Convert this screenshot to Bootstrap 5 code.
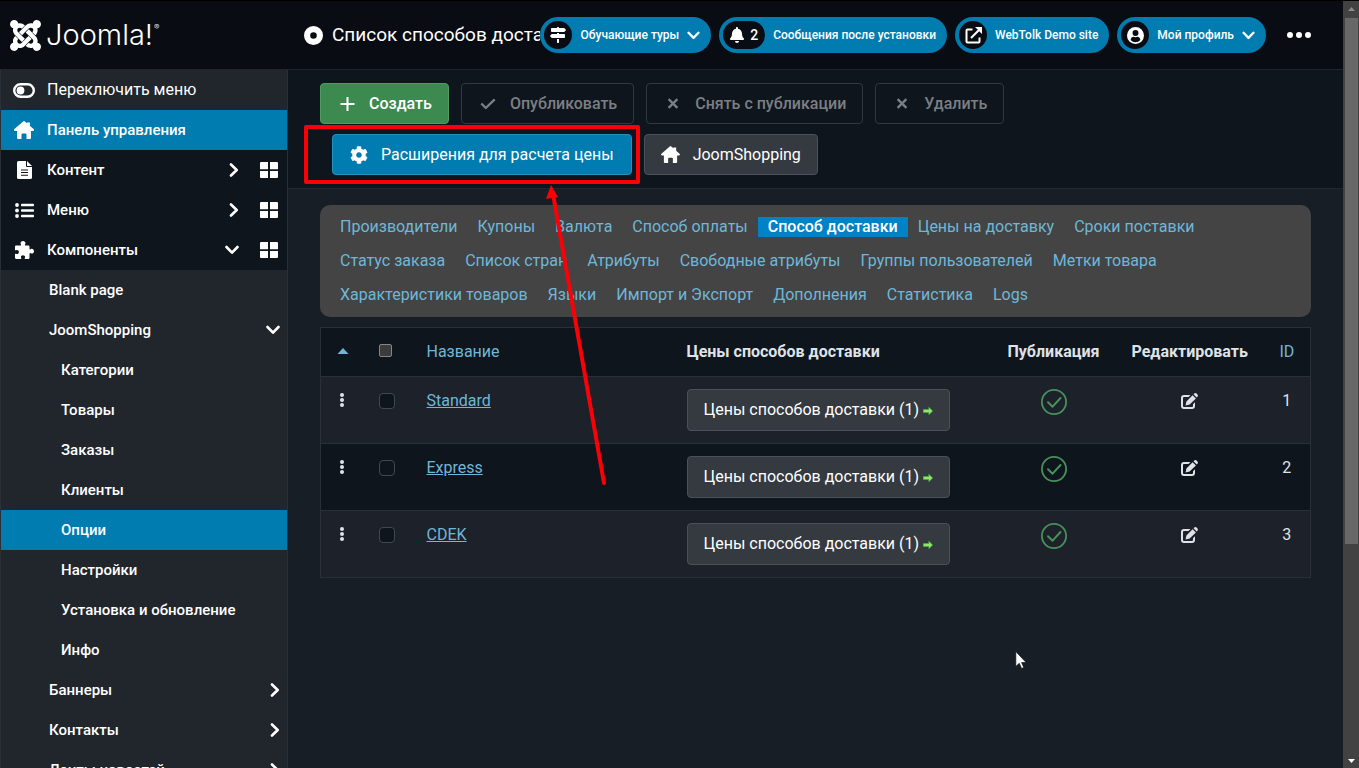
<!DOCTYPE html>
<html lang="ru">
<head>
<meta charset="utf-8">
<meta name="viewport" content="width=device-width, initial-scale=1">
<title>Список способов доставки</title>
<link href="https://cdn.jsdelivr.net/npm/bootstrap@5.3.0/dist/css/bootstrap.min.css" rel="stylesheet">
<style>
  :root { --blue: #007cb0; --line: #2a3036; --deep: #0f151c; --panel: #20262c; --sky: #6fb7d8; }
  body { font-family: Roboto, "Noto Sans", sans-serif; font-size: 16px; line-height: 24px; color: #dfe3e7; background: #181e25; }
  svg { fill: currentColor; flex: none; display: block; }
  .stroke { fill: none; stroke: currentColor; stroke-width: 3; stroke-linecap: round; stroke-linejoin: round; }
  .shell { border-top: 1px solid #000; }

  .topbar { background: #090c13; height: 69px; border-bottom: 1px solid #20252b; color: #fff; }
  .brand { width: 288px; padding-left: 10px; gap: 5px; color: #fff; flex: none; }
  .brand-word { font: 300 29px/36px Inter, sans-serif; }
  .brand-word sup { font-size: 8px; top: -15px; margin-left: 1px; }
  .page-title { font-size: 19px; line-height: 28px; font-weight: 400; margin: 0; }
  .title-wrap { padding-left: 16px; gap: 9px; min-width: 0; }
  .pills { gap: 8px; padding-right: 32px; }
  .pill { height: 36px; padding: 0 11px 0 4px; gap: 8px; border: 0; border-radius: 18px; background: var(--blue); color: #fff; font-size: 12px; font-weight: 500; white-space: nowrap; text-decoration: none; }
  .pill-icon { min-width: 28px; height: 28px; border-radius: 14px; background: #090c13; gap: 6px; font-size: 14px; }
  .pill-icon.wide { padding: 0 7px; }
  .dots { border: 0; background: none; color: #fff; padding: 0; margin-left: 13px; }

  .side { width: 288px; flex: none; background: var(--panel); border: solid var(--line); border-width: 0 1px; overflow: hidden; font-size: 15px; font-weight: 500; }
  .side a, .side button { display: flex; align-items: center; width: 100%; height: 40px; padding: 0 9px 0 11px; color: #fff; text-decoration: none; border: 0; background: none; flex: none; }
  .side .ico { width: 24px; margin-right: 11px; display: flex; justify-content: center; }
  .side .top { background: var(--deep); }
  .side .on { background: var(--blue); }
  .side .sub { padding: 0 7px 0 48px; }
  .side .sub2 { padding-left: 60px; }
  .side .arr { margin-left: auto; }
  .side .grid { margin-left: 21px; }
  .side .toggle { font-size: 16px; font-weight: 400; }

  .tools { background: var(--deep); border-bottom: 1px solid #22282f; padding: 13px 32px 13px 20px; row-gap: 10px; }
  .tools .btn { height: 41px; margin-left: 12px; padding: 0 17px; display: flex; align-items: center; gap: 13px; border-radius: 4px; color: #fff; border: 1px solid #4b5158; background: #343a40; font-size: 16px; font-weight: 400; }
  .tools .btn-house { padding: 0 16px; }
  .tools .btn-make { background: #3c8a4f; border-color: #4f9c61; font-weight: 500; padding: 0 16px 0 18px; }
  .tools .btn-ext { background: var(--blue); border-color: #2590bf; }
  .tools .btn:disabled { background: none; border-color: #33383e; color: #7b7f84; opacity: 1; font-weight: 500; gap: 14px; padding: 0 16px 0 18px; }
  /* the wrapped second row starts one button margin further in */
  .tools .btn-ext { margin-left: 24px; }
  .marked { position: relative; }
  .marked::after { content: ""; position: absolute; inset: -10px -9px -10px -29px; border: 4px solid #f90106; border-radius: 2px; pointer-events: none; }

  .content { padding: 16px 32px 0; }
  .links { background: #444; border-radius: 10px; padding: 5px 10px; margin-bottom: 10px; }
  .links a { color: var(--sky); text-decoration: none; padding: 0 10px; line-height: 20px; margin: 7px 0; }
  .links .cur { background: #0082c4; color: #fff; font-weight: 500; }

  .grid-table { table-layout: fixed; margin: 0; border: 1px solid var(--line); color: #dfe3e7; }
  .grid-table > :not(caption) > * > * { padding: 12px 16px; background: #1d2129; color: inherit; border-bottom: 1px solid var(--line); box-shadow: none; white-space: nowrap; vertical-align: top; }
  .grid-table > thead > tr > *, .grid-table > tbody > tr:nth-child(even) > * { background: var(--deep); }
  .grid-table a { color: var(--sky); }
  .grid-table th { font-weight: 700; }
  .grid-table th a { text-decoration: none; font-weight: 400; }
  .grid-table .btn { height: 42px; padding: 0 16px; background: #343a40; border: 1px solid #4b5158; border-radius: 4px; color: #fff; display: inline-flex; align-items: center; gap: 4px; font-size: 16px; }
  .grid-table .form-check-input { width: 16px; height: 16px; margin: 4px 0 0 -1px; background: var(--deep); border: 1px solid #42484f; border-radius: 4px; display: block; }
  .grid-table thead .form-check-input { width: 13px; height: 13px; background: #3b3b3b; border-color: #858585; border-radius: 2px; }
  .grid-table .plain { border: 0; background: none; color: inherit; padding: 0; }
  .grid-table .plain.live { color: #46925c; }

  .bar { width: 16px; flex: none; background: #424242; color: #fff; padding-bottom: 5px; }
  .bar-up { height: 16px; color: #8a8a8a; }
  .bar-thumb { width: 13px; height: 69%; background: #686868; margin: 1px 0 0 2px; }
  .arrow { position: absolute; left: 540px; top: 184px; }
  .pointer { position: absolute; left: 1015px; top: 650px; }
</style>
</head>
<body>
<svg width="0" height="0" class="position-absolute" aria-hidden="true">
  <symbol id="joomla" viewBox="0 32 448 448"><path d="M.6 92.1C.6 58.8 27.4 32 60.4 32c30 0 54.5 21.9 59.2 50.2 32.6-7.6 67.1.6 96.5 30l-44.3 44.3c-20.5-20.5-42.6-16.3-55.4-3.5-14.3 14.3-14.3 37.9 0 52.2l99.5 99.5-44 44.3c-87.7-87.2-49.7-49.7-99.8-99.7-26.8-26.5-35-64.8-24.8-98.9C20.4 144.6.6 120.7.6 92.1zm129.5 116.4l44.3 44.3c10-10 89.7-89.7 99.7-99.8 14.3-14.3 37.6-14.3 51.9 0 12.8 12.8 17 35-3.5 55.4l44 44.3c31.2-31.2 38.5-67.6 28.9-101.2 29.2-4.1 51.9-29.2 51.9-59.5 0-33.2-26.8-60.1-59.8-60.1-30.3 0-55.4 22.5-59.5 51.6-33.8-9.9-71.7-1.5-98.3 25.1-18.3 19.1-71.1 71.5-99.6 99.900zm266.3 152.200c8.200-32.700-.9-68.500-26.300-93.900-11.800-12.200 5 4.700-99.500-99.700l-44.300 44.300 99.700 99.700c14.300 14.300 14.300 37.600 0 51.900-12.800 12.800-35 17-55.400-3.500l-44 44.300c27.600 30.200 68 38.800 102.700 28 5.500 27.400 29.700 48.100 58.900 48.100 33 0 59.800-26.800 59.800-60.100 0-30.200-22.500-55-51.600-59.100zm-84.300-53.100l-44-44.300c-87 86.400-50.400 50.400-99.700 99.800-14.300 14.300-37.600 14.300-51.900 0-13.100-13.400-16.900-35.300 3.200-55.400l-44-44.300c-30.200 30.200-38 65.200-29.500 98.300-26.700 6-46.200 29.900-46.200 58.200C0 453.200 26.800 480 59.800 480c28.600 0 52.500-19.800 58.600-46.700 32.700 8.200 68.500-.6 94.200-26 32.100-32 12.200-12.400 99.500-99.700z"/></symbol>
  <symbol id="home" viewBox="0 0 20 18"><path d="M9.200.4a1.200 1.200 0 0 1 1.600 0L13 2.300V1.600h3v3.300l3.600 3.200c.8.8.4 1.900-.7 1.900H17v7a1 1 0 0 1-1 1h-3.500v-4.500a1 1 0 0 0-1-1h-3a1 1 0 0 0-1 1V18H4a1 1 0 0 1-1-1v-7H1.100C0 10-.4 8.900.4 8.100z"/></symbol>
  <symbol id="chevR" viewBox="0 0 10 14"><path class="stroke" style="stroke-width:2.600" d="M2 1.500 7.700 7 2 12.500"/></symbol>
  <symbol id="chevD" viewBox="0 0 14 10"><path class="stroke" style="stroke-width:2.600" d="M1.500 2 7 7.700 12.500 2"/></symbol>
  <symbol id="tiles" viewBox="0 0 18 16"><path d="M1 0h7v7.300H0V1a1 1 0 0 1 1-1zM10 0h7a1 1 0 0 1 1 1v6.300h-8zM0 9h8v7H1a1 1 0 0 1-1-1zM10 9h8v6a1 1 0 0 1-1 1h-7z"/></symbol>
  <symbol id="puzzle" viewBox="0 0 19 18"><path d="M0 5.800C0 5 .5 4.500 1.200 4.500h4.200c.7 0 .8-.6.5-1.100C4.900 1.800 6.100 0 8 0s3.100 1.800 2.100 3.400c-.3.500-.2 1.100.5 1.100h2.700c.7 0 1.200.5 1.200 1.200v2c0 .7.600.9 1.100.5 1.600-1 3.400.200 3.400 2s-1.800 3-3.400 2c-.5-.3-1.100-.1-1.100.5v4c0 .8-.5 1.300-1.200 1.300h-3.100c-.6 0-.8-.5-.4-1 .8-1.500-.200-2.800-1.800-2.800s-2.600 1.300-1.800 2.800c.3.500.1 1-.5 1H1.200C.5 18 0 17.500 0 16.800v-3.600c0-.6.500-.7 1-.4 1.500.7 2.900-.200 2.900-1.800s-1.400-2.500-2.900-1.800c-.5.300-1 .1-1-.4z"/></symbol>
  <symbol id="cog" viewBox="0 0 512 512"><path d="M487.4 315.7l-42.6-24.6c4.3-23.2 4.3-47 0-70.2l42.6-24.6c4.9-2.8 7.1-8.6 5.5-14-11.1-35.6-30-67.8-54.7-94.6-3.8-4.1-10-5.1-14.8-2.3L380.8 110c-17.9-15.4-38.5-27.3-60.8-35.1V25.8c0-5.6-3.9-10.5-9.4-11.7-36.7-8.2-74.3-7.8-109.2 0-5.5 1.2-9.4 6.1-9.4 11.7V75c-22.2 7.9-42.8 19.8-60.8 35.1L88.7 85.5c-4.9-2.8-11-1.9-14.8 2.3-24.7 26.7-43.6 58.9-54.7 94.6-1.7 5.4.6 11.2 5.5 14L67.3 221c-4.3 23.2-4.3 47 0 70.2l-42.6 24.6c-4.9 2.8-7.1 8.6-5.5 14 11.1 35.6 30 67.8 54.7 94.6 3.8 4.1 10 5.1 14.8 2.3l42.6-24.6c17.9 15.4 38.5 27.3 60.8 35.1v49.2c0 5.6 3.9 10.5 9.4 11.7 36.7 8.2 74.3 7.8 109.2 0 5.5-1.2 9.4-6.1 9.4-11.7v-49.2c22.2-7.9 42.8-19.8 60.8-35.1l42.6 24.6c4.9 2.8 11 1.9 14.8-2.3 24.7-26.7 43.6-58.9 54.7-94.6 1.5-5.5-.7-11.3-5.6-14.1zM256 336c-44.1 0-80-35.9-80-80s35.9-80 80-80 80 35.9 80 80-35.9 80-80 80z"/></symbol>
  <symbol id="signs" viewBox="0 0 512 512"><path d="M507.31 84.69L464 41.37c-6-6-14.14-9.37-22.63-9.37H288V16c0-8.84-7.16-16-16-16h-32c-8.84 0-16 7.16-16 16v16H56c-13.25 0-24 10.75-24 24v80c0 13.25 10.75 24 24 24h385.37c8.49 0 16.62-3.37 22.63-9.37l43.31-43.31c6.25-6.26 6.25-16.38 0-22.63zM224 496c0 8.84 7.16 16 16 16h32c8.84 0 16-7.16 16-16V384h-64v112zm232-272H288v-32h-64v32H70.63c-8.49 0-16.62 3.37-22.63 9.37L4.69 276.69c-6.25 6.25-6.25 16.38 0 22.63L48 342.63c6 6 14.14 9.37 22.63 9.37H456c13.25 0 24-10.75 24-24v-80c0-13.25-10.75-24-24-24z"/></symbol>
  <symbol id="bell" viewBox="0 0 448 512"><path d="M224 512c35.32 0 63.97-28.65 63.97-64H160.03c0 35.35 28.65 64 63.97 64zm215.39-149.71c-19.32-20.76-55.47-51.99-55.47-154.29 0-77.7-54.48-139.9-127.94-155.16V32c0-17.67-14.32-32-31.98-32s-31.98 14.33-31.98 32v20.84C118.56 68.1 64.08 130.3 64.08 208c0 102.3-36.15 133.53-55.47 154.29-6 6.45-8.66 14.16-8.61 21.71.11 16.4 12.98 32 32.1 32h383.8c19.12 0 32-15.6 32.1-32 .05-7.55-2.61-15.27-8.61-21.71z"/></symbol>
  <symbol id="cross" viewBox="0 0 12 12"><path class="stroke" style="stroke-linecap:butt;stroke-width:2.500" d="M1.200 1.200l9.600 9.600M10.800 1.200l-9.600 9.600"/></symbol>
  <symbol id="pen" viewBox="0 0 17 16"><path d="M9.500 2H3a3 3 0 0 0-3 3v8a3 3 0 0 0 3 3h8a3 3 0 0 0 3-3V9.200l-2 2V13a1 1 0 0 1-1 1H3a1 1 0 0 1-1-1V5a1 1 0 0 1 1-1h4.500z"/><path d="M11.600 2.200l3.300 3.300-6.300 6.100-4 1 .8-4zM12.500 1.300 13.200.600c.7-.7 1.700-.7 2.400 0l.8.8c.7.7.7 1.700 0 2.400l-.7.8z"/></symbol>
  <symbol id="okay" viewBox="0 0 26 26"><circle cx="13" cy="13" r="12.100" fill="none" stroke="currentColor" stroke-width="1.800"/><path class="stroke" style="stroke-width:2" d="M7 13.200l4.600 4.500L19.500 9"/></symbol>
  <symbol id="drag" viewBox="0 0 4 14"><circle cx="2" cy="2" r="2"/><circle cx="2" cy="7" r="2"/><circle cx="2" cy="12" r="2"/></symbol>
  <symbol id="go" viewBox="0 0 10 9"><path fill="#8fe66f" stroke="#3fae2a" stroke-width=".6" d="M.3 3.500h5.500V1.200L9.700 5 5.800 8.800V6.500H.3z"/></symbol>
</svg>

<div class="shell d-flex vh-100 overflow-hidden">
  <div class="d-flex flex-column flex-grow-1" style="min-width:0">
    <header class="topbar d-flex align-items-center flex-shrink-0">
      <a href="#" class="brand d-flex align-items-center text-decoration-none">
        <svg width="31" height="31"><use href="#joomla"/></svg>
        <span class="brand-word">Joomla!<sup>®</sup></span>
      </a>
      <div class="title-wrap d-flex align-items-center flex-fill overflow-hidden">
        <svg width="19" height="19" viewBox="0 0 19 19"><path fill-rule="evenodd" d="M9.500 0a9.500 9.500 0 1 1 0 19 9.500 9.500 0 0 1 0-19zm0 6.200a3.300 3.300 0 1 0 0 6.600 3.300 3.300 0 0 0 0-6.600z"/></svg>
        <h1 class="page-title text-nowrap">Список способов доставки</h1>
      </div>
      <div class="pills d-flex align-items-center flex-shrink-0">
        <button type="button" class="pill d-flex align-items-center"><span class="pill-icon d-flex align-items-center justify-content-center"><svg width="16" height="16"><use href="#signs"/></svg></span>Обучающие туры<svg width="13" height="9"><use href="#chevD"/></svg></button>
        <a href="#" class="pill d-flex align-items-center"><span class="pill-icon wide d-flex align-items-center justify-content-center"><svg width="14" height="16"><use href="#bell"/></svg>2</span>Сообщения после установки</a>
        <a href="#" class="pill d-flex align-items-center"><span class="pill-icon d-flex align-items-center justify-content-center"><svg width="17" height="17" viewBox="0 0 17 17"><path class="stroke" style="stroke-width:2;stroke-linecap:butt" d="M7.500 2.500H2.500a1 1 0 0 0-1 1v11a1 1 0 0 0 1 1h11a1 1 0 0 0 1-1v-4M6 11l8-8"/><path d="M10 0h7v7l-2.300-2.300L12.300 2.300z"/></svg></span>WebTolk Demo site</a>
        <button type="button" class="pill d-flex align-items-center"><span class="pill-icon d-flex align-items-center justify-content-center"><svg width="17" height="17" viewBox="0 0 16 16"><circle cx="8" cy="8" r="8"/><circle cx="8" cy="5.700" r="2.800" fill="#090c13"/><path fill="#090c13" d="M3.400 12.200c.3-2 1.500-3 2.700-3 1.300.5 2.500.5 3.800 0 1.200 0 2.400 1 2.700 3a6 6 0 0 1-9.200 0z"/></svg></span>Мой профиль<svg width="13" height="9"><use href="#chevD"/></svg></button>
        <button type="button" class="dots" aria-label="Ещё"><svg width="24" height="6" viewBox="0 0 24 6"><circle cx="3" cy="3" r="3"/><circle cx="12" cy="3" r="3"/><circle cx="21" cy="3" r="3"/></svg></button>
      </div>
    </header>

    <div class="d-flex flex-grow-1" style="min-height:0">
      <nav class="side d-flex flex-column">
        <button type="button" class="toggle"><span class="ico"><svg width="22" height="15" viewBox="0 0 22 15"><rect x="1.200" y="1.200" width="19.600" height="12.600" rx="6.300" fill="none" stroke="currentColor" stroke-width="2.400"/><circle cx="7.500" cy="7.500" r="3.900"/></svg></span>Переключить меню</button>
        <a href="#" class="on"><span class="ico"><svg width="20" height="18"><use href="#home"/></svg></span>Панель управления</a>
        <a href="#" class="top"><span class="ico"><svg width="15" height="18" viewBox="0 0 15 18"><path fill-rule="evenodd" d="M1.500 0H9v5a1 1 0 0 0 1 1h5v10.500a1.500 1.500 0 0 1-1.500 1.500h-12A1.500 1.500 0 0 1 0 16.500v-15A1.500 1.500 0 0 1 1.500 0zM4 8.500v1h7v-1zm0 2.600v1h7v-1zm0 2.600v1h7v-1z"/><path d="M10 0l5 5h-5z"/></svg></span>Контент<svg class="arr" width="10" height="14"><use href="#chevR"/></svg><svg class="grid" width="18" height="16"><use href="#tiles"/></svg></a>
        <a href="#" class="top"><span class="ico"><svg width="19" height="15" viewBox="0 0 19 15"><circle cx="2" cy="2" r="1.900"/><circle cx="2" cy="7.500" r="1.900"/><circle cx="2" cy="13" r="1.900"/><rect x="6" y=".7" width="13" height="2.600" rx=".8"/><rect x="6" y="6.200" width="13" height="2.600" rx=".8"/><rect x="6" y="11.700" width="13" height="2.600" rx=".8"/></svg></span>Меню<svg class="arr" width="10" height="14"><use href="#chevR"/></svg><svg class="grid" width="18" height="16"><use href="#tiles"/></svg></a>
        <a href="#" class="top"><span class="ico"><svg width="19" height="18"><use href="#puzzle"/></svg></span>Компоненты<svg class="arr" width="14" height="10"><use href="#chevD"/></svg><svg class="grid" width="18" height="16"><use href="#tiles"/></svg></a>
        <a href="#" class="sub">Blank page</a>
        <a href="#" class="sub">JoomShopping<svg class="arr" width="14" height="10"><use href="#chevD"/></svg></a>
        <a href="#" class="sub sub2">Категории</a>
        <a href="#" class="sub sub2">Товары</a>
        <a href="#" class="sub sub2">Заказы</a>
        <a href="#" class="sub sub2">Клиенты</a>
        <a href="#" class="sub sub2 on">Опции</a>
        <a href="#" class="sub sub2">Настройки</a>
        <a href="#" class="sub sub2">Установка и обновление</a>
        <a href="#" class="sub sub2">Инфо</a>
        <a href="#" class="sub">Баннеры<svg class="arr" width="10" height="14"><use href="#chevR"/></svg></a>
        <a href="#" class="sub">Контакты<svg class="arr" width="10" height="14"><use href="#chevR"/></svg></a>
        <a href="#" class="sub">Ленты новостей<svg class="arr" width="10" height="14"><use href="#chevR"/></svg></a>
      </nav>

      <main class="flex-grow-1" style="min-width:0">
        <div class="tools d-flex flex-wrap">
          <button type="button" class="btn btn-make"><svg width="17" height="14" viewBox="0 0 17 14"><path d="M7.500 0h2v6h6v2h-6v6h-2V8h-6V6h6z"/></svg>Создать</button>
          <button type="button" class="btn" disabled><svg width="16" height="12" viewBox="0 0 16 12"><path class="stroke" style="stroke-width:2.400;stroke-linecap:butt" d="M1.300 5.500l4.500 4.500L14.700 1.300"/></svg>Опубликовать</button>
          <button type="button" class="btn" disabled><svg width="16" height="11"><use href="#cross"/></svg>Снять с публикации</button>
          <button type="button" class="btn" disabled><svg width="16" height="11"><use href="#cross"/></svg>Удалить</button>
          <button type="button" class="btn btn-ext marked"><svg width="18" height="18"><use href="#cog"/></svg>Расширения для расчета цены</button>
          <button type="button" class="btn btn-house"><svg width="19" height="17"><use href="#home"/></svg>JoomShopping</button>
        </div>

        <div class="content">
          <nav class="links d-flex flex-wrap">
            <a href="#">Производители</a><a href="#">Купоны</a><a href="#">Валюта</a><a href="#">Способ оплаты</a><a href="#" class="cur">Способ доставки</a><a href="#">Цены на доставку</a><a href="#">Сроки поставки</a><a href="#">Статус заказа</a><a href="#">Список стран</a><a href="#">Атрибуты</a><a href="#">Свободные атрибуты</a><a href="#">Группы пользователей</a><a href="#">Метки товара</a><a href="#">Характеристики товаров</a><a href="#">Языки</a><a href="#">Импорт и Экспорт</a><a href="#">Дополнения</a><a href="#">Статистика</a><a href="#">Logs</a>
          </nav>

          <table class="table grid-table">
            <colgroup><col style="width:43px"><col style="width:47px"><col style="width:260px"><col><col style="width:124px"><col style="width:148px"><col style="width:47px"></colgroup>
            <thead>
              <tr>
                <th><a href="#" aria-label="Порядок"><svg width="12" height="24" viewBox="0 0 12 24"><path d="M6 8l5.500 6H.5z"/></svg></a></th>
                <th><input type="checkbox" class="form-check-input" aria-label="Выбрать все"></th>
                <th><a href="#">Название</a></th>
                <th>Цены способов доставки</th>
                <th>Публикация</th>
                <th>Редактировать</th>
                <th><a href="#">ID</a></th>
              </tr>
            </thead>
            <tbody>
              <tr>
                <td><svg class="mx-auto mt-1" width="4" height="14"><use href="#drag"/></svg></td>
                <td><input type="checkbox" class="form-check-input" aria-label="Standard"></td>
                <td><a href="#">Standard</a></td>
                <td><a href="#" class="btn">Цены способов доставки (1)<svg width="10" height="9"><use href="#go"/></svg></a></td>
                <td><button type="button" class="plain live d-block mx-auto" aria-label="Опубликовано"><svg width="26" height="26"><use href="#okay"/></svg></button></td>
                <td><button type="button" class="plain d-block mx-auto mt-1" aria-label="Редактировать"><svg width="17" height="16"><use href="#pen"/></svg></button></td>
                <td class="text-center">1</td>
              </tr>
              <tr>
                <td><svg class="mx-auto mt-1" width="4" height="14"><use href="#drag"/></svg></td>
                <td><input type="checkbox" class="form-check-input" aria-label="Express"></td>
                <td><a href="#">Express</a></td>
                <td><a href="#" class="btn">Цены способов доставки (1)<svg width="10" height="9"><use href="#go"/></svg></a></td>
                <td><button type="button" class="plain live d-block mx-auto" aria-label="Опубликовано"><svg width="26" height="26"><use href="#okay"/></svg></button></td>
                <td><button type="button" class="plain d-block mx-auto mt-1" aria-label="Редактировать"><svg width="17" height="16"><use href="#pen"/></svg></button></td>
                <td class="text-center">2</td>
              </tr>
              <tr>
                <td><svg class="mx-auto mt-1" width="4" height="14"><use href="#drag"/></svg></td>
                <td><input type="checkbox" class="form-check-input" aria-label="CDEK"></td>
                <td><a href="#">CDEK</a></td>
                <td><a href="#" class="btn">Цены способов доставки (1)<svg width="10" height="9"><use href="#go"/></svg></a></td>
                <td><button type="button" class="plain live d-block mx-auto" aria-label="Опубликовано"><svg width="26" height="26"><use href="#okay"/></svg></button></td>
                <td><button type="button" class="plain d-block mx-auto mt-1" aria-label="Редактировать"><svg width="17" height="16"><use href="#pen"/></svg></button></td>
                <td class="text-center">3</td>
              </tr>
            </tbody>
          </table>
        </div>
      </main>
    </div>
  </div>

  <div class="bar d-flex flex-column" aria-hidden="true">
    <div class="bar-up d-flex align-items-center justify-content-center flex-shrink-0"><svg width="7" height="4" viewBox="0 0 7 4"><path d="M3.500 0L7 4H0z"/></svg></div>
    <div class="bar-thumb"></div>
    <svg class="mt-auto mx-auto" width="7" height="4" viewBox="0 0 7 4"><path d="M0 0h7L3.500 4z"/></svg>
  </div>
</div>

<svg class="arrow" width="70" height="304" viewBox="0 0 70 304" aria-hidden="true"><path d="M13 10L64 299" stroke="#f90106" stroke-width="4" stroke-linecap="round"/><path d="M11 1L18 13 6 15z" fill="#f90106"/></svg>
<svg class="pointer" width="12" height="20" viewBox="0 0 12 20" aria-hidden="true"><path fill="#fff" stroke="#0b0f14" stroke-width=".7" d="M.8 1.500v15l3.500-3.200 2.300 5.200 2.200-1-2.200-4.900h4.600z"/></svg>
<script src="https://cdn.jsdelivr.net/npm/bootstrap@5.3.0/dist/js/bootstrap.bundle.min.js"></script>
</body>
</html>
